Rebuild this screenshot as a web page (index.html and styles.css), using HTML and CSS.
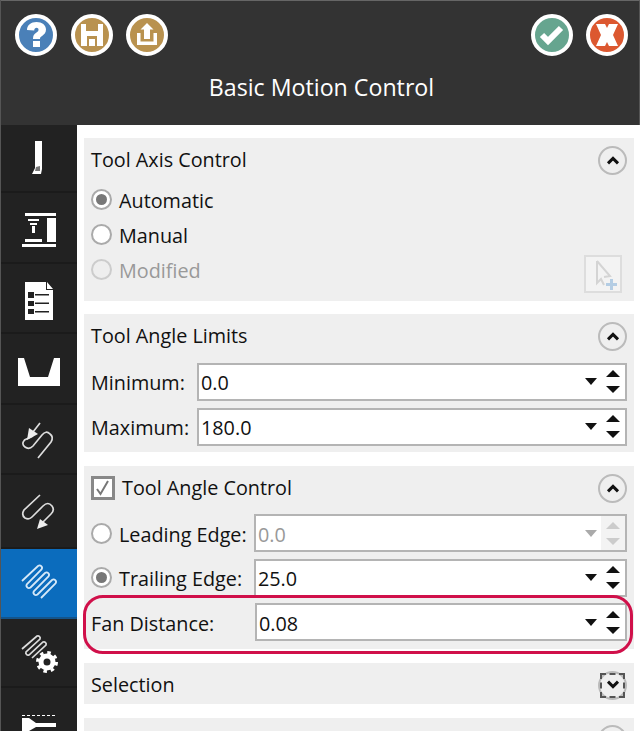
FILE: index.html
```html
<!DOCTYPE html>
<html lang="en">
<head>
<meta charset="utf-8">
<title>Basic Motion Control</title>
<link rel="stylesheet" href="styles.css">
</head>
<body>
<div class="app">
  <header class="header">
    <div class="toolbar">
      <div class="btn-group">
        <button class="round blue"><svg viewBox="0 0 34 34"><path fill="#fff" d="M8 12c0-5 4-8 9.500-8S27 7 27 11.500c0 3.500-2 5-4 6.500-1.500 1-2 1.500-2 3h-7c0-3.500 1-5 3.500-6.500 1.500-1 2-1.500 2-3 0-1-.8-1.800-2-1.800s-2.200 1-2.300 2.800zM14 23h7v6h-7z"/></svg></button>
        <button class="round gold"><svg viewBox="0 0 34 34"><path fill="#fff" d="M6 6h22v22H6z"/><path fill="#b9924f" d="M11 6h12v7H11zM12 18h10v10h-2v-7h-6v7h-2z"/></svg></button>
        <button class="round gold"><svg viewBox="0 0 34 34"><path fill="#fff" d="M17 5l6.500 6.500H20V21h-6v-9.500h-3.500zM7 15h3.500v8.500h13V15H27v12H7z"/></svg></button>
      </div>
      <div class="btn-group">
        <button class="round green"><svg viewBox="0 0 34 34"><path fill="none" stroke="#fff" stroke-width="6" d="M7 17l6 6 13-13"/></svg></button>
        <button class="round red"><svg viewBox="0 0 34 34"><path fill="#fff" d="M6 6h9l2 4 2-4h9l-5 11 5 11h-9l-2-4-2 4H6l5-11z"/></svg></button>
      </div>
    </div>
    <h1 class="title">Basic Motion Control</h1>
  </header>
  <div class="body">
    <nav class="sidebar">
      <div class="nav-item first"><svg viewBox="0 0 44 44"><path fill="#fff" d="M18 5h7v28l-1 5h-9l3-6z"/><path fill="#777" d="M19 31l4-1v5h-5z"/></svg></div>
      <div class="nav-item"><svg viewBox="0 0 44 44"><path fill="#fff" d="M8 8h31v3H8zM30 13h9v24h-9zM11 14h11v2H11zM13 18h7v2h-7zM15 21h3v7h-3zM8 34h17v3H8zM5 39h34v3H5z"/></svg></div>
      <div class="nav-item"><svg viewBox="0 0 44 44"><path fill="#fff" d="M8 6h21v8h7v30H8zM30 6l6 7h-6z"/><path fill="#222" d="M11 16h6v6h-6zM18 18h14v1.500H18zM11 25h6v5h-6zM18 26.500h14V28H18zM11 33h6v5h-6zM18 35h14v1.500H18z"/></svg></div>
      <div class="nav-item"><svg viewBox="0 0 44 44"><path fill="#fff" d="M1 12h6l6 19h18l6-19h6v28H1z"/></svg></div>
      <div class="nav-item"><svg viewBox="0 0 44 44"><path class="trace" d="M23 6l-7 9M16 19L7.500 23Q4 27 8 30q4 3 8-1l9-11q4-5 8-1 4 3 1 8L21 41"/><path fill="#eee" d="M10 23l2-12 9 6z"/></svg></div>
      <div class="nav-item tall"><svg viewBox="0 0 44 44"><path class="trace" d="M23 6L7 21q-3 5 1 8 4 2 7-1l11-11q5-5 9 0 3 4-1 8l-8 8"/><path fill="#eee" d="M20 40l3-10 8 6z"/></svg></div>
      <div class="nav-item active"><svg viewBox="0 0 44 44"><path class="trace-on" d="M5 20L21 5a2.500 2.500 0 0 1 3.500 3.500L10 23a2.500 2.500 0 0 0 3.500 3.500L28 12a2.500 2.500 0 0 1 3.500 3.500L17 30a2.500 2.500 0 0 0 3.500 3.500L35 19a2.500 2.500 0 0 1 3.500 3.500L24 37"/></svg></div>
      <div class="nav-item short"><svg viewBox="0 0 44 44"><path class="trace" d="M5 18L20 5a2.300 2.300 0 0 1 3 3L9 21a2.300 2.300 0 0 0 3 3L26 11a2.300 2.300 0 0 1 3 3L15 27"/><circle cx="30" cy="31" r="6" class="gear"/><circle cx="30" cy="31" r="9.500" class="teeth"/></svg></div>
      <div class="nav-item last"><svg viewBox="0 0 44 44"><path class="dash" d="M5 7.500h34"/><path fill="#fff" d="M5 10h7l7 5h20v4H19l-7 4v8H5z"/></svg></div>
    </nav>
    <main class="content">
      <section class="panel axis">
        <div class="panel-head"><span class="panel-title">Tool Axis Control</span><span class="circle"><svg viewBox="0 0 16 12"><path class="chev" d="M2 10l6-6 6 6"/></svg></span></div>
        <div class="radio-row"><span class="radio on"></span><span>Automatic</span></div>
        <div class="radio-row"><span class="radio"></span><span>Manual</span></div>
        <div class="radio-row disabled"><span class="radio"></span><span>Modified</span>
          <span class="pick"><svg viewBox="0 0 34 34"><path fill="none" stroke="#d4d4d4" stroke-width="2" d="M11 4v22l4-4 3 6M11 4l13 15-6 1"/><path fill="#b4cde4" d="M24 22h3v4h4v3h-4v4h-3v-4h-4v-3h4z"/></svg></span>
        </div>
      </section>
      <section class="panel limits">
        <div class="panel-head"><span class="panel-title">Tool Angle Limits</span><span class="circle"><svg viewBox="0 0 16 12"><path class="chev" d="M2 10l6-6 6 6"/></svg></span></div>
        <div class="field-row"><label class="label w-min">Minimum:</label><div class="input"><span class="value">0.0</span><span class="drop"></span><span class="spin"><i class="up"></i><i class="down"></i></span></div></div>
        <div class="field-row"><label class="label w-min">Maximum:</label><div class="input"><span class="value">180.0</span><span class="drop"></span><span class="spin"><i class="up"></i><i class="down"></i></span></div></div>
      </section>
      <section class="panel control">
        <div class="panel-head"><span class="check-wrap"><span class="check"><svg viewBox="0 0 18 18"><path fill="none" stroke="#777" stroke-width="2" d="M3 10l3.500 5L14 2"/></svg></span><span class="panel-title">Tool Angle Control</span></span><span class="circle"><svg viewBox="0 0 16 12"><path class="chev" d="M2 10l6-6 6 6"/></svg></span></div>
        <div class="field-row"><span class="radio"></span><label class="label w-edge">Leading Edge:</label><div class="input off"><span class="value">0.0</span><span class="drop"></span><span class="spin"><i class="up"></i><i class="down"></i></span></div></div>
        <div class="field-row"><span class="radio on"></span><label class="label w-edge">Trailing Edge:</label><div class="input"><span class="value">25.0</span><span class="drop"></span><span class="spin"><i class="up"></i><i class="down"></i></span></div></div>
        <div class="field-row fan"><label class="label w-fan">Fan Distance:</label><div class="input"><span class="value">0.08</span><span class="drop"></span><span class="spin"><i class="up"></i><i class="down"></i></span></div></div>
      </section>
      <section class="panel selection">
        <div class="panel-head"><span class="panel-title">Selection</span><span class="circle focus"><svg viewBox="0 0 16 12"><path class="chev" d="M2 2l6 6 6-6"/></svg></span></div>
      </section>
      <section class="panel stub"><span class="circle stub-circle"></span></section>
    </main>
  </div>
</div>
</body>
</html>
```
FILE: styles.css
```css
* { box-sizing: border-box; }
html, body { margin: 0; height: 731px; overflow: hidden; background: #fff; }
body { font-family: "Open Sans", "Noto Sans", sans-serif; font-size: 19.800px; color: #111; }
.app { width: 640px; height: 731px; display: flex; flex-direction: column; border-left: 1px solid #555; }
.header { height: 125px; flex: none; background: #333; border-top: 1px solid #666; border-right: 1px solid #555; }
.toolbar { display: flex; justify-content: space-between; padding: 13px 11px 0 14px; }
.btn-group { display: flex; gap: 13.500px; }
.round { width: 42px; height: 42px; padding: 0; border: 4px solid #fff; border-radius: 50%; display: flex; align-items: center; justify-content: center; }
.round svg { width: 34px; height: 34px; display: block; flex: none; }
.blue { background: #4a80b8; }
.gold { background: #b9924f; }
.green { background: #66a58f; }
.red { background: #dc5830; }
.title { margin: 16px 0 0; font-weight: 400; font-size: 23.200px; line-height: 30px; color: #fff; text-align: center; padding-left: 3px; }
.body { flex: 1; display: flex; min-height: 0; }
.sidebar { width: 76px; flex: none; background: #222; overflow: hidden; }
.nav-item { height: 70.500px; display: flex; align-items: center; justify-content: center; border-bottom: 2px solid #1b1b1b; }
.nav-item svg { width: 44px; height: 44px; display: block; }
.nav-item.first { height: 68px; }
.nav-item.tall { height: 73.500px; }
.nav-item.short { height: 69px; }
.nav-item.active { background: #0b6cbd; border-bottom-color: #14548a; }
.nav-item.last { align-items: flex-start; padding-top: 20px; border-bottom: 0; }
.trace { fill: none; stroke: #ddd; stroke-width: 1.700; }
.trace-on { fill: none; stroke: #d5e8f8; stroke-width: 1.800; }
.gear { fill: none; stroke: #fff; stroke-width: 5; }
.teeth { fill: none; stroke: #fff; stroke-width: 3; stroke-dasharray: 3.500 3.960; }
.dash { fill: none; stroke: #fff; stroke-width: 1; stroke-dasharray: 3 2; }
.content { flex: 1; padding: 13px 6px 0 7px; display: flex; flex-direction: column; gap: 14px; min-width: 0; }
.panel { background: #efefef; padding: 0 7px; flex: none; }
.axis { height: 163px; margin-bottom: -1px; }
.limits { height: 138px; }
.control { height: 183px; }
.selection { height: 41px; }
.stub { height: 20px; position: relative; overflow: hidden; }
.panel-head { height: 44px; display: flex; align-items: center; justify-content: space-between; }
.limits .panel-head, .control .panel-head { margin-bottom: 1px; }
.panel-title { line-height: 28px; }
.circle { width: 29px; height: 29px; border: 2px solid #bbb; border-radius: 50%; display: flex; align-items: center; justify-content: center; background: #efefef; position: relative; flex: none; }
.circle svg { width: 14px; height: 10px; display: block; }
.chev { fill: none; stroke: #111; stroke-width: 3.600; }
.focus::after { content: ""; position: absolute; left: 0; right: 0; top: 0; bottom: 0; border: 2px dashed #555; }
.stub-circle { position: absolute; right: 7px; top: 7px; }
.radio-row { height: 35px; display: flex; align-items: center; gap: 7px; position: relative; }
.radio-row span:nth-child(2) { padding-top: 2px; }
.radio { width: 21px; height: 21px; border: 2px solid #aaa; border-radius: 50%; background: #fff; flex: none; display: flex; align-items: center; justify-content: center; }
.radio.on::after { content: ""; width: 11px; height: 11px; border-radius: 50%; background: #777; }
.disabled { color: #999; }
.disabled .radio { background: #eee; border-color: #ccc; }
.pick { position: absolute; right: 5px; top: 3px; width: 38px; height: 38px; border: 2px solid #ddd; background: #f3f3f3; }
.pick svg { display: block; width: 34px; height: 34px; }
.field-row { height: 45px; display: flex; align-items: center; gap: 7px; }
.control .field-row { height: 44.500px; }
.label { flex: none; padding-top: 2px; }
.w-min { width: 99px; }
.w-edge { width: 128px; }
.w-fan { width: 157px; }
.input { flex: 1; height: 38px; border: 2px solid #b4b4b4; background: #fff; display: flex; align-items: center; padding-left: 2px; min-width: 0; }
.value { flex: 1; padding-top: 2px; }
.drop { width: 0; height: 0; border: 6px solid transparent; border-top: 7px solid #111; border-bottom: 0; margin-right: 4px; }
.spin { width: 24px; height: 100%; display: flex; flex-direction: column; align-items: center; justify-content: center; gap: 9px; }
.spin i { display: block; width: 0; height: 0; border: 7px solid transparent; }
.spin .up { border-top: 0; border-bottom: 7px solid #111; }
.spin .down { border-bottom: 0; border-top: 7px solid #111; }
.off { color: #999; }
.off .drop { border-top-color: #aaa; }
.off .spin { background: #f3f3f3; }
.off .spin .up { border-bottom-color: #ccc; }
.off .spin .down { border-top-color: #ccc; }
.check-wrap { display: flex; align-items: center; gap: 7px; }
.check { width: 24px; height: 24px; border: 3px solid #888; background: #fff; display: flex; }
.check svg { width: 18px; height: 18px; display: block; }
.fan { position: relative; }
.fan::before { content: ""; position: absolute; left: -8px; right: -6px; top: -5px; bottom: -9px; border: 3.500px solid #d0104a; border-radius: 20px; }
```
